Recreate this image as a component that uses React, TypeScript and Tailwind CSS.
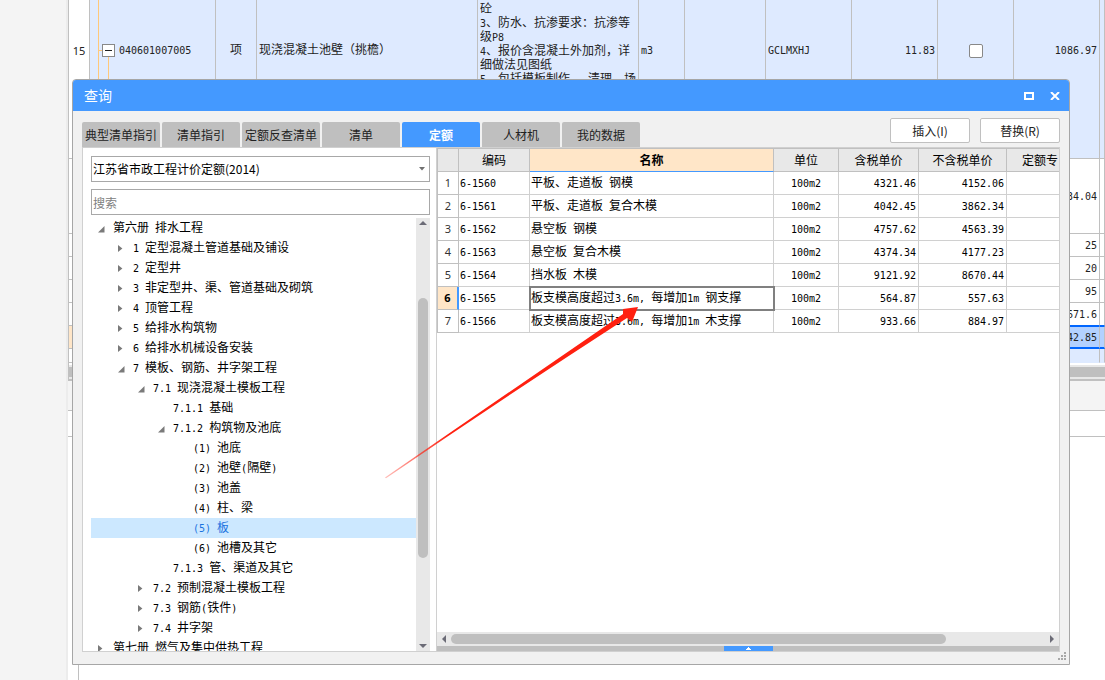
import { useState } from 'react'
import clsx from 'clsx'

const TABS = ['典型清单指引', '清单指引', '定额反查清单', '清单', '定额', '人材机', '我的数据']

type TreeNode = { label: string; level: number; state?: 'open' | 'closed' }

const TREE: TreeNode[] = [
  { label: '第六册 排水工程', level: 0, state: 'open' },
  { label: '1 定型混凝土管道基础及铺设', level: 1, state: 'closed' },
  { label: '2 定型井', level: 1, state: 'closed' },
  { label: '3 非定型井、渠、管道基础及砌筑', level: 1, state: 'closed' },
  { label: '4 顶管工程', level: 1, state: 'closed' },
  { label: '5 给排水构筑物', level: 1, state: 'closed' },
  { label: '6 给排水机械设备安装', level: 1, state: 'closed' },
  { label: '7 模板、钢筋、井字架工程', level: 1, state: 'open' },
  { label: '7.1 现浇混凝土模板工程', level: 2, state: 'open' },
  { label: '7.1.1 基础', level: 3 },
  { label: '7.1.2 构筑物及池底', level: 3, state: 'open' },
  { label: '(1) 池底', level: 4 },
  { label: '(2) 池壁(隔壁)', level: 4 },
  { label: '(3) 池盖', level: 4 },
  { label: '(4) 柱、梁', level: 4 },
  { label: '(5) 板', level: 4 },
  { label: '(6) 池槽及其它', level: 4 },
  { label: '7.1.3 管、渠道及其它', level: 3 },
  { label: '7.2 预制混凝土模板工程', level: 2, state: 'closed' },
  { label: '7.3 钢筋(铁件)', level: 2, state: 'closed' },
  { label: '7.4 井字架', level: 2, state: 'closed' },
  { label: '第七册 燃气及集中供热工程', level: 0, state: 'closed' },
]

const INDENT = ['pl-[7px]', 'pl-[27px]', 'pl-[47px]', 'pl-[67px]', 'pl-[87px]']

const ROWS = [
  ['6-1560', '平板、走道板 钢模', '100m2', '4321.46', '4152.06'],
  ['6-1561', '平板、走道板 复合木模', '100m2', '4042.45', '3862.34'],
  ['6-1562', '悬空板 钢模', '100m2', '4757.62', '4563.39'],
  ['6-1563', '悬空板 复合木模', '100m2', '4374.34', '4177.23'],
  ['6-1564', '挡水板 木模', '100m2', '9121.92', '8670.44'],
  ['6-1565', '板支模高度超过3.6m, 每增加1m 钢支撑', '100m2', '564.87', '557.63'],
  ['6-1566', '板支模高度超过3.6m, 每增加1m 木支撑', '100m2', '933.66', '884.97'],
]

const SHEET_COLS = [
  'w-[21px]', 'w-[126px]', 'w-[41px]', 'w-[221px]', 'w-[161px]', 'w-[46px]',
  'w-[81px]', 'w-[86px]', 'w-[86px]', 'w-[76px]', 'w-[86px]', '',
]

// Half-width characters take half the width of a CJK one
function Mixed({ text }: { text: string }) {
  return (
    <>
      {text.split(/([\x20-\x7e]+)/).map((part, i) =>
        i % 2 ? (
          <span key={i} className="font-['DejaVu_Sans_Mono',monospace] text-[10px] leading-none whitespace-pre">{part}</span>
        ) : (
          part
        ),
      )}
    </>
  )
}

function SheetRow({ value, className, cell }: { value: string; className: string; cell?: string }) {
  return (
    <tr className={className}>
      {SHEET_COLS.map((_, i) => (
        <td
          key={i}
          className={clsx(
            'border-r border-b p-0 pr-[2px] text-right',
            value && 'pb-[2px]',
            i === 0 ? 'border-[#c0c0c0]' : cell ?? 'border-[#c0c0c0]',
          )}
        >
          {i === 10 && <Mixed text={value} />}
        </td>
      ))}
    </tr>
  )
}

function Sheet() {
  return (
    <main className="min-w-0 flex-1 overflow-hidden bg-white">
      <div className="border-l border-[#c0c0c0]">
        <table className="w-full table-fixed border-separate border-spacing-0 leading-[14px] text-[#222]">
          <colgroup>
            {SHEET_COLS.map((w, i) => <col key={i} className={w} />)}
          </colgroup>
          <tbody>
            <tr className="h-[159px] align-top [&>td]:border-r [&>td]:border-b [&>td]:border-[#c0c0c0] [&>td]:px-[2px] [&>td]:pt-[42px] [&>td:not(:first-child)]:bg-[#deeaff]">
              <td className="!pt-[44px] text-center font-['Noto_Sans',sans-serif] text-[11px]">15</td>
              <td>
                <div className="relative pl-[27px]">
                  <span className="absolute -top-[42px] left-[6px] h-[158px] w-px bg-[#ffc87a]" />
                  <span className="absolute top-[8px] left-[7px] h-px w-[4px] bg-[#ffc87a]" />
                  <span className="absolute top-[15px] left-[16px] h-[101px] w-px bg-[#ffc87a]" />
                  <button type="button" aria-label="折叠" className="absolute top-[2px] left-[10px] flex size-[13px] items-center justify-center border border-[#888] bg-white">
                    <span className="h-px w-[7px] bg-[#222]" />
                  </button>
                  <Mixed text="040601007005" />
                </div>
              </td>
              <td className="text-center">项</td>
              <td>现浇混凝土池壁（挑檐）</td>
              <td className="!pt-px">
                <div className="h-[78px] overflow-hidden whitespace-nowrap">
                  <p>砼</p>
                  <p><Mixed text="3、防水、抗渗要求：抗渗等" /></p>
                  <p><Mixed text="级P8" /></p>
                  <p><Mixed text="4、报价含混凝土外加剂，详" /></p>
                  <p>细做法见图纸</p>
                  <p><Mixed text="5、包括模板制作 、清理、场" /></p>
                </div>
              </td>
              <td><Mixed text="m3" /></td>
              <td />
              <td><Mixed text="GCLMXHJ" /></td>
              <td className="text-right"><Mixed text="11.83" /></td>
              <td>
                <input type="checkbox" aria-label="锁定" className="mx-auto mt-[2px] block size-[14px] appearance-none rounded-[2px] border border-[#888] bg-white" />
              </td>
              <td className="text-right"><Mixed text="1086.97" /></td>
              <td className="!p-0" />
            </tr>
            <SheetRow value="34.04" className="h-[75px]" />
            <SheetRow value="25" className="h-[23px]" />
            <SheetRow value="20" className="h-[23px]" />
            <SheetRow value="95" className="h-[23px]" />
            <SheetRow value="671.6" className="h-[23px]" cell="border-r-[#c0c0c0] border-b-[#0066ff]" />
            <SheetRow
              value="42.85"
              className="h-[23px] [&>td:first-child]:bg-[#ffe6c8]"
              cell="border-t border-b-2 border-r-[#c0c0c0] border-y-[#0066ff] bg-[#b3d1ff]"
            />
            <SheetRow value="" className="h-[14px]" cell="border-r-[#c0c0c0] border-b-[#deeaff] bg-[#deeaff]" />
          </tbody>
        </table>
        <div className="mt-[2px] border-y-2 border-[#e8e8e8] bg-[#bfbfbf]">
          <div className="h-[10px]" />
        </div>
        <div className="h-[2px] bg-[#c0c0c0]" />
      </div>
      <div className="h-[30px] border-b border-[#c0c0c0] bg-[#f4f4f4]" />
      <div className="h-[26px] border-b border-[#c0c0c0]" />
      <div className="ml-[10px] h-[243px] border-l border-[#c0c0c0]" />
    </main>
  )
}

function TreePanel() {
  const [selected, setSelected] = useState('(5) 板')

  return (
    <section className="flex w-[354px] shrink-0 flex-col border-r border-[#d0d0d0] pt-[8px] pr-[6px] pl-[8px]">
      <div className="relative">
        <select aria-label="定额库" className="block h-[26px] w-full appearance-none border border-[#a8a8a8] bg-white px-px text-black outline-none">
          <option>江苏省市政工程计价定额(2014)</option>
        </select>
        <svg className="pointer-events-none absolute top-[11px] right-[5px]" width="6" height="4" viewBox="0 0 6 4" fill="#707070">
          <path d="M0 0h6L3 3.4z" />
        </svg>
      </div>
      <input
        type="text"
        aria-label="搜索"
        placeholder="搜索"
        className="mt-[7px] h-[26px] w-full shrink-0 border border-[#a8a8a8] bg-white px-px outline-none placeholder:text-[#808080]"
      />
      <div className="mt-[3px] flex min-h-0 flex-1">
        <ul role="tree" className="min-w-0 flex-1 overflow-hidden">
          {TREE.map((node) => (
            <li
              key={node.label}
              role="treeitem"
              aria-selected={node.label === selected}
              onClick={() => setSelected(node.label)}
              className={clsx(
                'flex h-[20px] whitespace-nowrap',
                INDENT[node.level],
                node.label === selected && 'bg-[#cce8ff] text-[#1a73e0]',
              )}
            >
              <span className="w-[15px] shrink-0 self-center">
                {node.state === 'open' && (
                  <svg width="7" height="12" viewBox="0 0 7 12" fill="#7a7a7a"><path d="M6.5 4v6.5H0z" /></svg>
                )}
                {node.state === 'closed' && (
                  <svg width="5" height="9" viewBox="0 0 5 9" fill="#7a7a7a"><path d="M0 1v7l4.4-3.5z" /></svg>
                )}
              </span>
              <span className="leading-[18px]"><Mixed text={node.label} /></span>
            </li>
          ))}
        </ul>
        <div className="flex w-[14px] flex-col items-center bg-[#e8e8e8] py-[3px]">
          <svg width="8" height="4" viewBox="0 0 8 4" fill="#6b6b76"><path d="M0 4h8L4 0z" /></svg>
          <div className="mt-[73px] h-[260px] w-[10px] rounded-full bg-[#bfbfbf]" />
          <svg className="mt-auto" width="8" height="4" viewBox="0 0 8 4" fill="#6b6b76"><path d="M0 0h8L4 4z" /></svg>
        </div>
      </div>
    </section>
  )
}

function QuotaTable() {
  const [current, setCurrent] = useState(5)

  return (
    <section className="flex min-w-0 flex-1 flex-col">
      <div className="min-h-0 flex-1 overflow-hidden">
        <table className="w-full table-fixed border-separate border-spacing-0 border-t border-l border-[#c0c0c0] leading-[16px]">
          <colgroup>
            <col className="w-[21px]" />
            <col className="w-[71px]" />
            <col className="w-[244px]" />
            <col className="w-[65px]" />
            <col className="w-[80px]" />
            <col className="w-[88px]" />
            <col />
          </colgroup>
          <thead>
            <tr className="h-[23px] [&>th]:border-r [&>th]:border-b [&>th]:border-[#c0c0c0] [&>th]:bg-[#e8e8e8] [&>th]:p-0 [&>th]:font-normal">
              <th />
              <th>编码</th>
              <th className="!border-b-[#4499ff] !bg-[#ffe6c8] !font-bold">名称</th>
              <th>单位</th>
              <th>含税单价</th>
              <th>不含税单价</th>
              <th className="overflow-hidden !border-r-0 !pl-[15px] text-left whitespace-nowrap">定额专</th>
            </tr>
          </thead>
          <tbody>
            {ROWS.map(([code, name, unit, taxed, untaxed], i) => (
              <tr
                key={code}
                onClick={() => setCurrent(i)}
                className="h-[23px] [&>td]:border-r [&>td]:border-b [&>td]:border-[#d0d0d0] [&>td]:px-[2px] [&>td]:pt-0 [&>td]:pb-[2px]"
              >
                <th
                  scope="row"
                  className={clsx(
                    "border-b border-[#c0c0c0] p-0 text-center font-['Noto_Sans',sans-serif] text-[11px]",
                    i === current ? 'border-r-2 border-r-[#4499ff] bg-[#ffe6c8] font-bold' : 'border-r font-normal text-[#333]',
                  )}
                >
                  {i + 1}
                </th>
                <td className="!px-px"><Mixed text={code} /></td>
                <td className={clsx('!px-px whitespace-nowrap', i === current && 'outline-2 -outline-offset-1 outline-[#808080]')}>
                  <Mixed text={name} />
                </td>
                <td className="text-center"><Mixed text={unit} /></td>
                <td className="text-right"><Mixed text={taxed} /></td>
                <td className="text-right"><Mixed text={untaxed} /></td>
                <td className="!border-r-0" />
              </tr>
            ))}
          </tbody>
        </table>
      </div>
      <div className="flex h-[14px] shrink-0 items-center bg-[#e8e8e8] px-[5px]">
        <svg width="4" height="8" viewBox="0 0 4 8" fill="#6b6b76"><path d="M4 0v8L0 4z" /></svg>
        <div className="mr-auto ml-[5px] h-[10px] w-[495px] rounded-full bg-[#bfbfbf]" />
        <svg width="4" height="8" viewBox="0 0 4 8" fill="#6b6b76"><path d="M0 0v8l4-4z" /></svg>
      </div>
      <div className="flex h-[5px] shrink-0 justify-center bg-[#bfbfbf]">
        <button type="button" aria-label="展开" className="flex w-[49px] items-center justify-center bg-[#4499ff]">
          <svg width="5" height="3" viewBox="0 0 5 3" fill="#fff"><path d="M0 3V2h1V1h1V0h1v1h1v1h1v1z" /></svg>
        </button>
      </div>
    </section>
  )
}

function QueryDialog() {
  const [tab, setTab] = useState('定额')

  return (
    <div
      role="dialog"
      aria-label="查询"
      className="absolute top-[79px] right-[35px] bottom-[15px] left-[72px] flex flex-col rounded-t-[4px] border border-[#a6a6a6] bg-[#f1f1f1]"
    >
      <header className="flex h-[31px] shrink-0 items-center rounded-t-[3px] bg-[#4499ff] pr-[9px] pl-[11px] text-white">
        <h1 className="mr-auto text-[14px]">查询</h1>
        <button type="button" aria-label="最大化" className="mr-[16px]">
          <svg className="block" width="10" height="8" viewBox="0 0 10 8" fill="none" stroke="#fff" strokeWidth="2"><path d="M1 1h8v6H1z" /></svg>
        </button>
        <button type="button" aria-label="关闭">
          <svg className="block" width="10" height="8" viewBox="0 0 10 8" fill="none" stroke="#fff" strokeWidth="2"><path d="M1 0l8 8M9 0L1 8" /></svg>
        </button>
      </header>
      <div className="flex h-[36px] shrink-0 items-end justify-between px-[9px]">
        <nav className="flex gap-[2px]">
          {TABS.map((name) => (
            <button
              key={name}
              type="button"
              onClick={() => setTab(name)}
              className={clsx(
                'h-[25px] w-[78px] rounded-t-[2px] whitespace-nowrap',
                name === tab ? 'bg-[#4499ff] font-bold text-white' : 'bg-[#bfbfbf] text-[#222]',
              )}
            >
              {name}
            </button>
          ))}
        </nav>
        <div className="mb-[4px] flex gap-[10px] text-[#222]">
          <button type="button" className="h-[25px] w-[80px] rounded-[2px] border border-[#c0c0c0] bg-white">插入(I)</button>
          <button type="button" className="h-[25px] w-[80px] rounded-[2px] border border-[#c0c0c0] bg-white">替换(R)</button>
        </div>
      </div>
      <div className="mx-[9px] mb-[12px] flex min-h-0 flex-1 border border-[#d0d0d0] bg-white">
        <TreePanel />
        <QuotaTable />
      </div>
      <svg className="absolute right-[3px] bottom-[4px]" width="8" height="8" viewBox="0 0 8 8" fill="#a8a8a8">
        <path d="M6 0h2v2H6zM3 3h2v2H3zM6 3h2v2H6zM0 6h2v2H0zM3 6h2v2H3zM6 6h2v2H6z" />
      </svg>
    </div>
  )
}

export default function App() {
  return (
    <div className="relative flex h-screen overflow-hidden bg-white font-['Noto_Sans_CJK_SC',sans-serif] text-[12px] text-black">
      <aside className="w-[68px] shrink-0 border-r-2 border-[#ececec] bg-[#f4f4f4]" />
      <Sheet />
      <QueryDialog />
      <svg className="pointer-events-none absolute top-[305px] left-[385px]" width="256" height="174" viewBox="0 0 256 174">
        <defs>
          <linearGradient id="arrow" gradientUnits="userSpaceOnUse" x1="1" y1="172" x2="64" y2="130">
            <stop offset="0" stopColor="#ff2010" stopOpacity="0.3" />
            <stop offset="1" stopColor="#ff2010" />
          </linearGradient>
        </defs>
        <path d="M0 172.500Q120 90 238 9L238 4L253 2L247 17L242 13Q120 92 1 173.200Z" fill="url(#arrow)" />
      </svg>
    </div>
  )
}
